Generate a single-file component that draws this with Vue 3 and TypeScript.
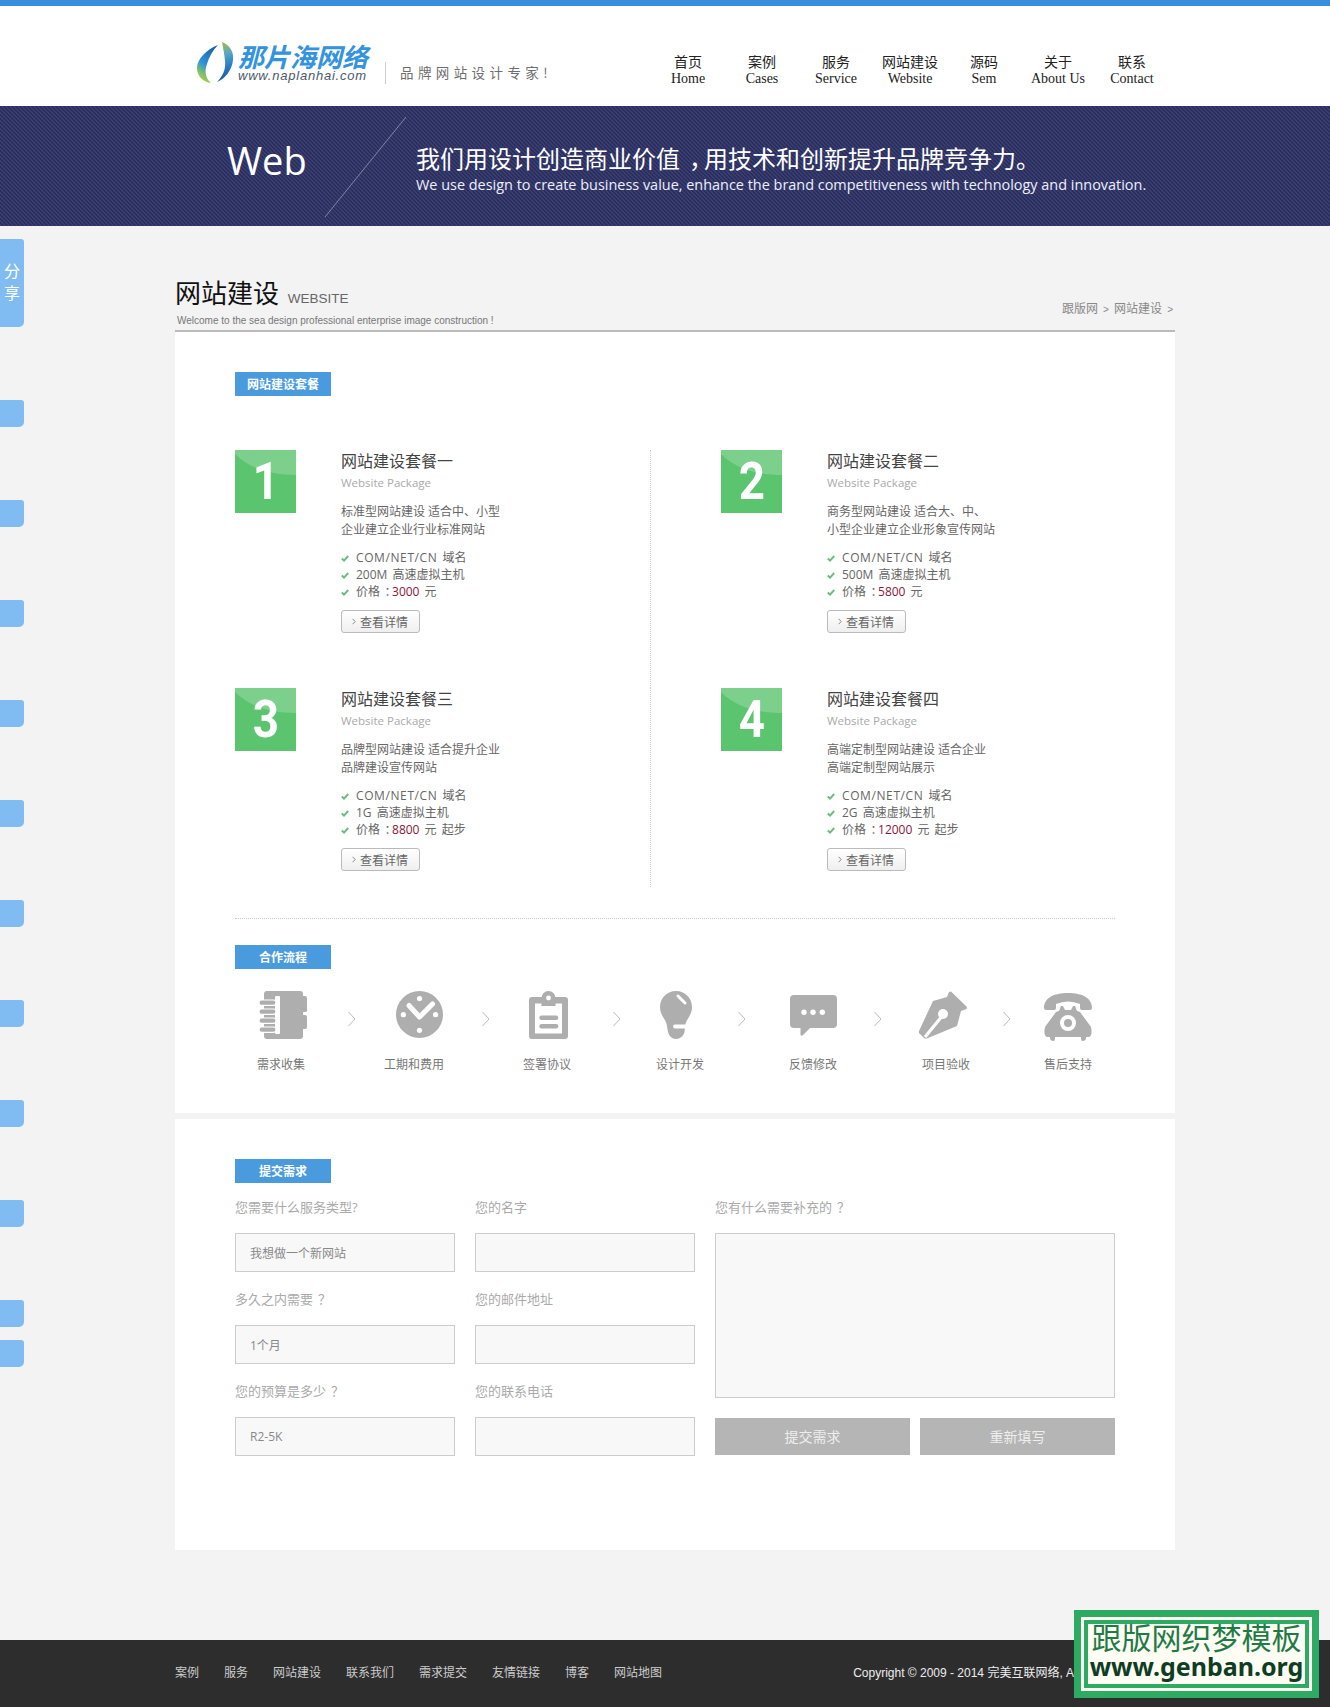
<script setup lang="ts">
interface Pkg { n: number; title: string; desc: string[]; host: string; price: string; suffix: string }
const nav = [
  ['首页', 'Home'], ['案例', 'Cases'], ['服务', 'Service'], ['网站建设', 'Website'],
  ['源码', 'Sem'], ['关于', 'About Us'], ['联系', 'Contact'],
]
const pkgs: Pkg[] = [
  { n: 1, title: '网站建设套餐一', desc: ['标准型网站建设 适合中、小型', '企业建立企业行业标准网站'], host: '200M 高速虚拟主机', price: '3000', suffix: ' 元' },
  { n: 2, title: '网站建设套餐二', desc: ['商务型网站建设 适合大、中、', '小型企业建立企业形象宣传网站'], host: '500M 高速虚拟主机', price: '5800', suffix: ' 元' },
  { n: 3, title: '网站建设套餐三', desc: ['品牌型网站建设 适合提升企业', '品牌建设宣传网站'], host: '1G 高速虚拟主机', price: '8800', suffix: ' 元 起步' },
  { n: 4, title: '网站建设套餐四', desc: ['高端定制型网站建设 适合企业', '高端定制型网站展示'], host: '2G 高速虚拟主机', price: '12000', suffix: ' 元 起步' },
]
const steps = ['需求收集', '工期和费用', '签署协议', '设计开发', '反馈修改', '项目验收', '售后支持']
const sideTabs = [400, 500, 600, 700, 800, 900, 1000, 1100, 1200, 1300, 1340]
const fieldsA = [
  { label: '您需要什么服务类型?', tail: '', value: '我想做一个新网站' },
  { label: '多久之内需要', tail: '？', value: '1个月' },
  { label: '您的预算是多少', tail: '？', value: 'R2-5K' },
]
const fieldsB = [{ label: '您的名字' }, { label: '您的邮件地址' }, { label: '您的联系电话' }]
const foot = ['案例', '服务', '网站建设', '联系我们', '需求提交', '友情链接', '博客', '网站地图']
</script>

<template>
  <div class="page">
    <header class="header">
      <div class="wrap header-in">
        <div class="logo">
          <svg class="swirl" width="38" height="42" viewBox="0 0 38 42">
            <defs>
              <linearGradient id="swl" x1="0.7" y1="0" x2="0.3" y2="1">
                <stop offset="0" stop-color="#1a5fa6" />
                <stop offset=".55" stop-color="#2f93d8" />
                <stop offset=".8" stop-color="#7fbf6a" />
                <stop offset="1" stop-color="#b3cf45" />
              </linearGradient>
              <linearGradient id="swr" x1="0.4" y1="0" x2="0.5" y2="1">
                <stop offset="0" stop-color="#a3bd3f" />
                <stop offset=".3" stop-color="#5aa7c0" />
                <stop offset=".6" stop-color="#2a7fca" />
                <stop offset="1" stop-color="#15558f" />
              </linearGradient>
            </defs>
            <path d="M21 3C10 7 0 17 0 26C0 34 6 40 14 41C9 37 7 30 10 22C12 15 16 8 21 3Z" fill="url(#swl)" />
            <path d="M25 0C33 3 37 10 36 18C35 28 28 37 20 40C26 34 29 27 28 19C27.5 12 26 6 25 0Z" fill="url(#swr)" />
          </svg>
          <div class="logo-text">
            <div class="logo-cn">那片海网络</div>
            <div class="logo-en">www.naplanhai.com</div>
          </div>
          <span class="logo-div"></span>
          <span class="logo-tag">品牌网站设计专家!</span>
        </div>
        <nav class="nav">
          <a v-for="item in nav" :key="item[1]" class="nav-item">
            <span>{{ item[0] }}</span>
            <span>{{ item[1] }}</span>
          </a>
        </nav>
      </div>
    </header>

    <section class="banner">
      <svg class="slash" width="82" height="101" viewBox="0 0 82 101"><line x1="81" y1="0" x2="0" y2="100" stroke="#7f84a6" stroke-width="1" /></svg>
      <div class="wrap banner-in">
        <div class="web">Web</div>
        <div class="slogan">
          <div class="slogan-cn">我们用设计创造商业价值<span class="p">，</span>用技术和创新提升品牌竞争力。</div>
          <div class="slogan-en">We use design to create business value, enhance the brand competitiveness with technology and innovation.</div>
        </div>
      </div>
    </section>

    <div class="wrap">
      <div class="page-head">
        <div>
          <h1>网站建设 <small>WEBSITE</small></h1>
          <p class="welcome">Welcome to the sea design professional enterprise image construction !</p>
        </div>
        <div class="crumb">跟版网 <i>&gt;</i> 网站建设 <i>&gt;</i></div>
      </div>

      <section class="panel panel-a">
        <div class="tag">网站建设套餐</div>
        <div class="pkgs">
          <article v-for="p in pkgs" :key="p.n" class="pkg">
            <div class="num">
              <svg class="shine" width="61" height="26" viewBox="0 0 61 26"><path d="M0 0H61V25C38 25 16 20 0 4Z" fill="#7dd08c" /></svg>
              <span>{{ p.n }}</span>
            </div>
            <div class="pkg-body">
              <h3>{{ p.title }}</h3>
              <div class="pkg-en">Website Package</div>
              <p class="pkg-desc"><template v-for="d in p.desc" :key="d">{{ d }}<br /></template></p>
              <ul class="pkg-list">
                <li><svg class="check" width="8" height="7" viewBox="0 0 8 7"><path d="M.8 3.6L3 5.6L7.2 1" fill="none" stroke="#6dbb80" stroke-width="2" /></svg><span class="lat">COM/NET/CN</span> 域名</li>
                <li><svg class="check" width="8" height="7" viewBox="0 0 8 7"><path d="M.8 3.6L3 5.6L7.2 1" fill="none" stroke="#6dbb80" stroke-width="2" /></svg>{{ p.host }}</li>
                <li><svg class="check" width="8" height="7" viewBox="0 0 8 7"><path d="M.8 3.6L3 5.6L7.2 1" fill="none" stroke="#6dbb80" stroke-width="2" /></svg>价格<span class="p">：</span><em>{{ p.price }}</em>{{ p.suffix }}</li>
              </ul>
              <a class="more"><svg width="4" height="7" viewBox="0 0 4 7"><path d="M.6.8L3.2 3.5L.6 6.2" fill="none" stroke="#888" stroke-width="1" /></svg>查看详情</a>
            </div>
          </article>
        </div>
        <div class="sep"></div>
        <div class="tag tag-b">合作流程</div>
        <div class="flow-icons">
          <svg width="48" height="48" viewBox="0 0 48 48" fill="#aeaeae">
            <path d="M8 0H41Q44 0 44 3V5H46Q48 5 48 7V20Q48 21 46 21H44V24H46Q48 24 48 26V36Q48 38 46 38H44V45Q44 48 41 48H8Q5 48 5 45V3Q5 0 8 0Z" />
            <rect x="16" y="5" width="5" height="38" rx="1" fill="#fff" />
            <g stroke="#fff" stroke-width="1.2"><rect x="0" y="9" width="17" height="5.4" rx="2.7" /><rect x="0" y="18" width="17" height="5.4" rx="2.7" /><rect x="0" y="27" width="17" height="5.4" rx="2.7" /><rect x="0" y="36" width="17" height="5.4" rx="2.7" /></g>
          </svg>
          <svg class="chev" width="8" height="16" viewBox="0 0 8 16"><path d="M.5 1L7 8L.5 15" fill="none" stroke="#bbb" /></svg>
          <svg width="48" height="48" viewBox="0 0 48 48">
            <circle cx="23.5" cy="23.5" r="23.5" fill="#aeaeae" />
            <g fill="#fff"><circle cx="23.5" cy="7.6" r="2.6" /><circle cx="7.4" cy="23.7" r="2.6" /><circle cx="39.6" cy="23.7" r="2.6" /><circle cx="23.5" cy="39.3" r="2.6" /></g>
            <path d="M13 14.5L23.5 26L36.5 13" fill="none" stroke="#fff" stroke-width="5" stroke-linecap="round" stroke-linejoin="round" />
          </svg>
          <svg class="chev" width="8" height="16" viewBox="0 0 8 16"><path d="M.5 1L7 8L.5 15" fill="none" stroke="#bbb" /></svg>
          <svg width="39" height="48" viewBox="0 0 39 48">
            <rect x="0" y="6" width="39" height="42" rx="3" fill="#aeaeae" />
            <rect x="6" y="12.5" width="27" height="30" fill="#fff" />
            <circle cx="19.5" cy="7" r="7" fill="#aeaeae" />
            <rect x="12.5" y="7" width="14" height="8" fill="#aeaeae" />
            <circle cx="19.5" cy="7" r="2.4" fill="#fff" />
            <rect x="10.3" y="24.5" width="19" height="4.6" rx="2.3" fill="#aeaeae" />
            <rect x="10.3" y="33" width="19" height="4.6" rx="2.3" fill="#aeaeae" />
          </svg>
          <svg class="chev" width="8" height="16" viewBox="0 0 8 16"><path d="M.5 1L7 8L.5 15" fill="none" stroke="#bbb" /></svg>
          <svg width="32" height="48" viewBox="0 0 32 48">
            <path d="M16 0C25 0 32 7 32 16C32 22 29 26 26.5 30C25 33 25 36 24.5 41C23.5 45 20 48 16 48C12 48 9 45 8 41C7 36 7 33 5.5 30C3 26 0 22 0 16C0 7 7 0 16 0Z" fill="#aeaeae" />
            <path d="M18 5L25 12" stroke="#fff" stroke-width="3" stroke-linecap="round" />
            <path d="M15 35.5H27" stroke="#fff" stroke-width="4" stroke-linecap="round" />
          </svg>
          <svg class="chev" width="8" height="16" viewBox="0 0 8 16"><path d="M.5 1L7 8L.5 15" fill="none" stroke="#bbb" /></svg>
          <svg class="chat" width="47" height="41" viewBox="0 0 47 41">
            <path d="M4 0H43Q47 0 47 4V29Q47 33 43 33H20L13 40Q10 42 10.5 38V33H4Q0 33 0 29V4Q0 0 4 0Z" fill="#aeaeae" />
            <g fill="#fff"><circle cx="14" cy="17.3" r="2.7" /><circle cx="23" cy="17.3" r="2.7" /><circle cx="32.3" cy="17.3" r="2.7" /></g>
          </svg>
          <svg class="chev" width="8" height="16" viewBox="0 0 8 16"><path d="M.5 1L7 8L.5 15" fill="none" stroke="#bbb" /></svg>
          <svg width="48" height="48" viewBox="0 0 48 48">
            <path d="M0 40Q-.5 42 1 43L4 46L5 47Q7 48 9 47L38 35L42 20L47.5 18L48 16L32 .5L30 1L28 6L14 10Z" fill="#aeaeae" />
            <path d="M6 46L24 24" stroke="#fff" stroke-width="3.2" />
            <circle cx="24" cy="23" r="5" fill="#fff" />
          </svg>
          <svg class="chev" width="8" height="16" viewBox="0 0 8 16"><path d="M.5 1L7 8L.5 15" fill="none" stroke="#bbb" /></svg>
          <svg class="phone" width="48" height="48" viewBox="0 0 48 48">
            <path d="M0 15C0 5 10 0 24 0C38 0 48 5 48 15Q48 17 46 17H38Q36 17 36 15V11Q24 6 12 11V15Q12 17 10 17H2Q0 17 0 15Z" fill="#aeaeae" />
            <path d="M17 13L19 13L21 17H27L29 13L31 13L33 18L36 19L47 34Q49 44 44 44H42V46Q41 48 39 48Q37 48 37 46V44H11V46Q11 48 9 48Q7 48 6 46V44H4Q-1 44 1 34L12 19L15 18Z" fill="#aeaeae" />
            <circle cx="24" cy="30" r="8" fill="#fff" />
            <circle cx="24" cy="30" r="4" fill="#aeaeae" />
          </svg>
        </div>
        <div class="flow-labels"><span v-for="s in steps" :key="s">{{ s }}</span></div>
      </section>

      <section class="panel panel-b">
        <div class="tag">提交需求</div>
        <form class="form" @submit.prevent>
          <div class="col">
            <label v-for="f in fieldsA" :key="f.label" class="field">
              <span class="lbl">{{ f.label }}<span class="p">{{ f.tail }}</span></span>
              <input :value="f.value" readonly />
            </label>
          </div>
          <div class="col">
            <label v-for="f in fieldsB" :key="f.label" class="field">
              <span class="lbl">{{ f.label }}</span>
              <input />
            </label>
          </div>
          <div class="col">
            <label class="field field-area">
              <span class="lbl">您有什么需要补充的<span class="p">？</span></span>
              <textarea></textarea>
            </label>
            <div class="btns">
              <button type="submit">提交需求</button>
              <button type="reset">重新填写</button>
            </div>
          </div>
        </form>
      </section>
    </div>

    <footer class="footer">
      <div class="wrap footer-in">
        <div class="foot-links"><a v-for="f in foot" :key="f">{{ f }}</a></div>
        <div class="copy">Copyright © 2009 - 2014 完美互联网络, All rights reserved</div>
      </div>
    </footer>

    <aside class="side side-main">分<br />享</aside>
    <aside v-for="t in sideTabs" :key="t" class="side" :style="{ top: t + 'px' }"></aside>

    <div class="stamp">
      <div class="stamp-in">
        <div class="stamp-cn">跟版网织梦模板</div>
        <div class="stamp-en">www.genban.org</div>
      </div>
    </div>
  </div>
</template>

<style>
html, body { margin: 0; background: #f3f3f3; }
</style>

<style scoped>
.page { position: relative; height: 1707px; overflow: hidden; background: #f3f3f3; font-family: "Open Sans", "Noto Sans CJK SC", sans-serif; color: #666; font-size: 12px; }
.wrap { width: 1000px; margin-left: 175px; }
.p { margin-left: .38em; letter-spacing: -.38em; }
.header { background: #fff; border-top: 6px solid #3a8ede; height: 100px; }
.header-in { display: flex; height: 100px; box-sizing: border-box; padding: 36px 6px 0 22px; }
.logo { display: flex; align-items: flex-start; }
.swirl { display: block; flex: none; }
.logo-text { margin-left: 3px; margin-top: 1px; width: 132px; }
.logo-cn { font: italic 700 26px/26px "Noto Sans CJK SC", sans-serif; color: #3393de; white-space: nowrap; }
.logo-en { font: italic 400 13px/13px "Liberation Sans", sans-serif; color: #4a5a6a; letter-spacing: .78px; white-space: nowrap; }
.logo-div { width: 1px; height: 22px; background: #ccc; margin: 20px 0 0 15px; }
.logo-tag { margin: 21px 0 0 14px; font: 13.5px/18px "Noto Sans CJK SC", sans-serif; letter-spacing: 4.4px; color: #6e6e6e; white-space: nowrap; }
.nav { display: flex; margin-left: auto; padding-top: 13px; }
.nav-item { width: 74px; display: flex; flex-direction: column; align-items: center; font: 14px/16px "Liberation Serif", "Noto Sans CJK SC", serif; color: #222; white-space: nowrap; }

.banner { position: relative; height: 120px; background-color: #2a2e5e; background-image: linear-gradient(45deg, #3a3e6e 25%, #2a2e5e 25%, #2a2e5e 50%, #3a3e6e 50%, #3a3e6e 75%, #2a2e5e 75%); background-size: 4px 4px; }
.slash { position: absolute; left: 325px; top: 11px; }
.banner-in { display: flex; height: 120px; color: #fff; }
.web { font-size: 38px; line-height: 54px; margin: 27px 0 0 52px; width: 189px; }
.slogan { padding-top: 36px; }
.slogan-cn { font: 24px/32px "Noto Sans CJK SC", sans-serif; white-space: nowrap; }
.slogan-en { font-size: 14.45px; line-height: 20px; color: #eef; white-space: nowrap; margin-top: 1px; }

.page-head { display: flex; justify-content: space-between; align-items: flex-end; height: 106px; box-sizing: border-box; border-bottom: 2px solid #bbb; padding-bottom: 3px; }
h1 { margin: 0; font: 400 26px/26px "Noto Sans CJK SC", sans-serif; color: #111; white-space: nowrap; }
h1 small { font: 13.5px/26px "Liberation Sans", sans-serif; color: #666; margin-left: 3px; }
.welcome { margin: 3px 0 0 2px; font: 10px/12px "Liberation Sans", sans-serif; color: #777; white-space: nowrap; }
.crumb { color: #888; line-height: 14px; margin-bottom: 10px; white-space: nowrap; }
.crumb i { font-style: normal; margin: 0 2px; font-family: "Liberation Sans", sans-serif; font-size: 10px; }

.panel { background: #fff; padding: 40px 60px; }
.panel-a { height: 781px; box-sizing: border-box; }
.panel-b { margin-top: 6px; height: 431px; box-sizing: border-box; }
.tag { width: 96px; height: 24px; background: #4a9bde; color: #fff; font: 700 12px/23px "Noto Sans CJK SC", sans-serif; text-align: center; }
.tag-b { margin-top: 26px; }
.pkgs { display: grid; grid-template-columns: 416px 464px; margin-top: 54px; }
.pkg { display: flex; height: 238px; box-sizing: border-box; }
.pkg:nth-child(n+3) { height: 199px; }
.pkg:nth-child(odd) { border-right: 1px dotted #d0d0d0; }
.pkg:nth-child(even) { padding-left: 70px; }
.num { position: relative; flex: none; width: 61px; height: 63px; background: #5bc46f; display: flex; align-items: center; justify-content: center; overflow: hidden; }
.shine { position: absolute; left: 0; top: 0; }
.num span { position: relative; font: 700 52px/63px "Roboto", "Liberation Sans", sans-serif; color: #fff; transform: scaleX(.88); }
.pkg-body { margin-left: 45px; }
h3 { margin: 1px 0 0; font: 400 16px/18px "Noto Sans CJK SC", sans-serif; color: #444; white-space: nowrap; }
.pkg-en { color: #aaa; font-size: 11.5px; line-height: 16px; margin-top: 6px; }
.pkg-desc { margin: 12px 0 0; line-height: 17.5px; color: #666; white-space: nowrap; }
.pkg-list { list-style: none; margin: 11px 0 0; padding: 0; line-height: 17px; color: #666; word-spacing: 2px; }
.pkg-list li { white-space: nowrap; }
.lat { letter-spacing: .6px; }
.check { margin-right: 7px; }
.pkg-list em { font-style: normal; color: #8a1538; }
.more { display: flex; align-items: center; width: 79px; height: 23px; box-sizing: border-box; margin-top: 10px; padding-left: 10px; border: 1px solid #bbb; border-radius: 3px; background: linear-gradient(#fff, #efefef); color: #666; white-space: nowrap; }
.more svg { margin-right: 4px; }
.sep { margin-top: 31px; border-top: 1px dotted #ccc; }
.flow-icons { display: grid; grid-template-columns: 89px 48px 86px 47px 84px 47px 78px 52px 84px 45px 84px 41px 48px; margin: 22px 0 0 24px; height: 50px; align-items: start; }
.flow-icons svg { display: block; }
.chev { margin-top: 20px; }
.chat { margin-top: 4px; }
.phone { margin-top: 2px; }
.flow-labels { display: grid; grid-template-columns: 127px 139px 133px 133px 133px 122px 48px; margin: 16px 0 0 22px; line-height: 16px; color: #777; white-space: nowrap; }

.form { display: grid; grid-template-columns: 220px 220px 400px; column-gap: 20px; margin-top: 16px; }
.field { display: block; margin-bottom: 19px; }
.lbl { display: block; font-size: 13px; line-height: 16px; color: #aaa; margin-bottom: 18px; white-space: nowrap; }
input, textarea { display: block; width: 100%; box-sizing: border-box; border: 1px solid #ccc; background: #f8f8f8; height: 39px; padding: 0 14px; font: 12px "Open Sans", "Noto Sans CJK SC", sans-serif; color: #888; outline: 0; border-radius: 0; resize: none; }
textarea { height: 165px; }
.btns { display: flex; gap: 10px; margin-top: 20px; }
.field-area { margin-bottom: 0; }
button { flex: 1; height: 37px; border: 0; background: #b5b5b5; color: #eee; font: 14px "Noto Sans CJK SC", sans-serif; padding: 0 0 2px; }

.footer { height: 67px; margin-top: 90px; background: #2d2d2d; }
.footer-in { display: flex; height: 63px; align-items: center; }
.foot-links { display: flex; gap: 25px; color: #ccc; white-space: nowrap; }
.copy { margin-left: 191px; width: 221px; overflow: hidden; font: 12px "Liberation Sans", "Noto Sans CJK SC", sans-serif; color: #eee; white-space: nowrap; flex: none; }

.side { position: absolute; left: 0; width: 24px; height: 27px; background: #80bcf2; border-radius: 0 3px 5px 0; }
.side-main { top: 239px; height: 88px; box-sizing: border-box; padding-top: 20px; text-align: center; color: #fff; font: 16px/22px "Noto Sans CJK SC", sans-serif; }
.stamp { position: absolute; left: 1074px; top: 1610px; width: 245px; height: 88px; box-sizing: border-box; border: 7px solid #2eab63; background: #fdfdf3; padding: 3px; }
.stamp-in { height: 100%; box-sizing: border-box; border: 4px solid #2eab63; text-align: center; }
.stamp-cn { font: 30px/34px "Noto Sans CJK SC", sans-serif; color: #1f7a45; margin-top: -5px; white-space: nowrap; }
.stamp-en { font: 700 25px/28px "Noto Sans", sans-serif; color: #0f3d24; white-space: nowrap; margin-top: -1px; }
</style>
